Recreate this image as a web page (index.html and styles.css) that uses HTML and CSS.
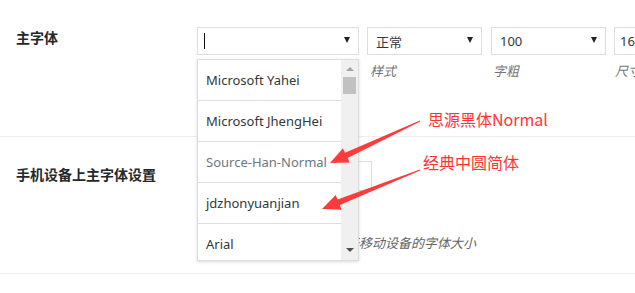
FILE: index.html
```html
<!DOCTYPE html>
<html lang="zh-CN">
<head>
    <meta charset="UTF-8">
    <title>字体设置</title>
    <link rel="stylesheet" href="styles.css">
</head>
<body>
    <div class="settings">
        <div class="row">
            <div class="row-label">主字体</div>
            <div class="row-field">
                <div class="font-controls">
                    <div class="field field-family">
                        <div class="select select-family">
                            <span class="text-cursor"></span>
                            <span class="arrow"></span>
                        </div>

                        <!-- 打开状态的字体下拉菜单 -->
                        <div class="dropdown">
                            <ul class="dropdown-list">
                                <li>Microsoft Yahei</li>
                                <li>Microsoft JhengHei</li>
                                <li class="muted">Source-Han-Normal</li>
                                <li>jdzhonyuanjian</li>
                                <li>Arial</li>
                            </ul>
                            <div class="scrollbar">
                                <span class="scroll-up"></span>
                                <span class="scroll-thumb"></span>
                                <span class="scroll-down"></span>
                            </div>
                        </div>
                    </div>
                    <div class="field field-style">
                        <div class="select"><span>正常</span><span class="arrow"></span></div>
                        <div class="hint">样式</div>
                    </div>
                    <div class="field field-weight">
                        <div class="select"><span>100</span><span class="arrow"></span></div>
                        <div class="hint">字粗</div>
                    </div>
                    <div class="field field-size">
                        <div class="select"><span>16</span></div>
                        <div class="hint">尺寸</div>
                    </div>
                </div>
            </div>
        </div>

        <div class="row">
            <div class="row-label">手机设备上主字体设置</div>
            <div class="row-field row-field-mobile">
                <div class="select select-mobile"></div>
                <div class="desc">于移动设备的字体大小</div>
            </div>
        </div>
    </div>

    <!-- 截图上的红色标注 -->
    <div class="annotations">
        <svg class="arrows" width="635" height="293" viewBox="0 0 635 293">
            <polygon points="420.2,121.5 347.6,158.1 349.7,162.6 330,163 342.9,148.2 345.0,152.7 419.8,120.5" />
            <polygon points="420.2,170.5 339.8,205.1 341.7,209.7 322,209 335.7,194.9 337.6,199.5 419.8,169.5" />
        </svg>
        <div class="note note-first">思源黑体Normal</div>
        <div class="note note-second">经典中圆简体</div>
    </div>
</body>
</html>
```

FILE: styles.css
```css
body {
    margin: 0;
    padding: 0;
    background: #ffffff;
    font-family: 'Noto Sans', 'Noto Sans CJK SC', sans-serif;
    color: #32373c;
    overflow: hidden;
    position: relative;
    width: 635px;
    height: 293px;
}

.settings {
    display: flex;
    flex-direction: column;
}

.row {
    display: flex;
    height: 136px;
    border-bottom: 1px solid #eeeeee;
}

.row-label {
    width: 181px;
    flex-shrink: 0;
    padding: 27px 0 0 16px;
    font-size: 14px;
    line-height: 20px;
    font-weight: bold;
    color: #23282d;
    font-family: 'Noto Sans CJK SC', sans-serif;
}

.row-field {
    padding-top: 27px;
    flex-shrink: 0;
}

.row-field-mobile {
    padding-top: 24px;
}

.font-controls {
    display: flex;
    gap: 8px;
}

.field {
    position: relative;
    display: flex;
    flex-direction: column;
}

.select {
    box-sizing: border-box;
    height: 28px;
    border: 1px solid #dddddd;
    display: flex;
    align-items: center;
    padding: 0 8px;
    font-size: 13px;
    background: #ffffff;
}

.select .arrow {
    margin-left: auto;
    width: 0;
    height: 0;
    border-left: 3.5px solid transparent;
    border-right: 3.5px solid transparent;
    border-top: 6px solid #222222;
    margin-top: -2px;
}

.select-family {
    width: 162px;
    padding-left: 6px;
    padding-right: 8px;
}

.text-cursor {
    width: 1px;
    height: 16px;
    background: #111111;
}

.field-style .select,
.field-weight .select {
    width: 115px;
}

.field-weight {
    margin-left: 1px;
}

.field-size .select {
    width: 60px;
    padding-left: 5px;
}

.hint {
    margin-top: 6px;
    padding-left: 3px;
    font-size: 13px;
    line-height: 20px;
    font-style: italic;
    color: #777777;
    font-family: 'Noto Sans CJK SC', sans-serif;
}

.field-weight .hint {
    padding-left: 2px;
}

.field-size .hint {
    padding-left: 1px;
}

.dropdown {
    position: absolute;
    top: 32px;
    left: 0;
    box-sizing: border-box;
    width: 162px;
    height: 202px;
    border: 1px solid #dddddd;
    box-shadow: 0 1px 3px rgba(0, 0, 0, 0.15);
    background: #ffffff;
    display: flex;
    overflow: hidden;
    z-index: 10;
}

.dropdown-list {
    list-style: none;
    margin: 0;
    padding: 0;
    width: 143px;
    flex-shrink: 0;
}

.dropdown-list li {
    height: 40px;
    line-height: 40px;
    border-bottom: 1px solid #dddddd;
    padding-left: 8px;
    font-size: 13px;
    color: #32373c;
    white-space: nowrap;
    overflow: hidden;
}

.dropdown-list li.muted {
    color: #6c7781;
}

.scrollbar {
    width: 17px;
    background: #f0f0f0;
    position: relative;
}

.scroll-up,
.scroll-down {
    position: absolute;
    left: 5px;
    width: 0;
    height: 0;
    border-left: 4px solid transparent;
    border-right: 4px solid transparent;
}

.scroll-up {
    top: 7px;
    border-bottom: 4px solid #a3a3a3;
}

.scroll-down {
    bottom: 8px;
    border-top: 4px solid #505050;
}

.scroll-thumb {
    position: absolute;
    top: 17px;
    left: 2px;
    width: 13px;
    height: 17px;
    background: #c1c1c1;
}

.select-mobile {
    width: 175px;
    height: 30px;
}

.desc {
    margin-top: 42px;
    margin-left: 149px;
    font-size: 13px;
    line-height: 20px;
    font-style: italic;
    color: #666666;
    white-space: nowrap;
    font-family: 'Noto Sans CJK SC', sans-serif;
}

.annotations {
    position: absolute;
    top: 0;
    left: 0;
    width: 635px;
    height: 293px;
    pointer-events: none;
    z-index: 20;
}

.arrows {
    position: absolute;
    top: 0;
    left: 0;
}

.arrows polygon {
    fill: #ff3c3c;
}

.note {
    position: absolute;
    font-size: 16px;
    line-height: 20px;
    color: #ff3333;
    font-family: 'Noto Sans CJK SC', sans-serif;
    white-space: nowrap;
}

.note-first {
    top: 109px;
    left: 428px;
}

.note-second {
    top: 152px;
    left: 423px;
}
```
